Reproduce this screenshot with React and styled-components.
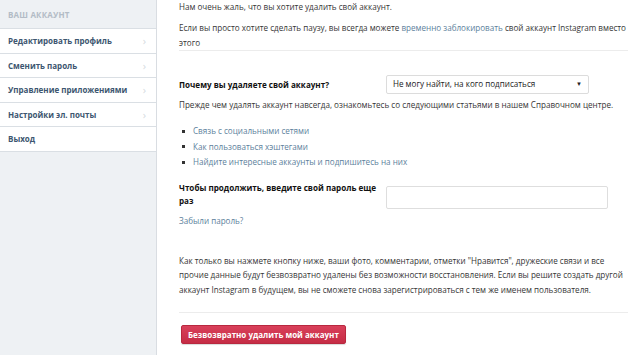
import React from 'react';
import styled, { createGlobalStyle } from 'styled-components';

const Global = createGlobalStyle`
  html, body { margin: 0; padding: 0; background: #fff; }
  body { font-family: "Open Sans", "Noto Sans", Arial, sans-serif; }
`;

const Page = styled.div`
  display: flex;
  width: 640px;
  height: 355px;
  overflow: hidden;
  background: #fff;
`;

const Sidebar = styled.aside`
  width: 156px;
  flex-shrink: 0;
  background: #eef1f4;
  border-right: 1px solid #d9dde2;
`;

const SideTitle = styled.div`
  height: 28px;
  padding-left: 8px;
  display: flex;
  align-items: center;
  font-size: 8px;
  font-weight: 700;
  color: #b3bcc6;
  letter-spacing: 0.2px;
`;

const Menu = styled.ul`
  list-style: none;
  margin: 0;
  padding: 0;
  border-top: 1px solid #dadfe4;
`;

const MenuItem = styled.li`
  height: 23.5px;
  display: flex;
  align-items: center;
  justify-content: space-between;
  padding: 0 10px 0 8px;
  background: #fff;
  border-bottom: 1px solid #dadfe4;
  font-size: 8px;
  font-weight: 700;
  color: #3d5670;
`;

const Chevron = styled.span`
  color: #d5dae0;
  font-size: 11px;
  font-weight: 400;
`;

const Main = styled.main`
  flex: 1;
  padding: 0 12px 0 22px;
  font-size: 8.1px;
  color: #363636;
  line-height: 14.5px;
`;

const P = styled.p`
  margin: ${p => p.$m || '0'};
`;

const Link = styled.a`
  color: #5d7f9c;
  text-decoration: none;
`;

const Divider = styled.hr`
  border: 0;
  border-top: 1px solid #ececec;
  margin: ${p => p.$m || '0'};
`;

const FormRow = styled.div`
  display: grid;
  grid-template-columns: 207px 1fr;
  align-items: ${p => p.$align || 'center'};
  margin: ${p => p.$m || '0'};
`;

const Label = styled.div`
  font-weight: 700;
  color: #111;
  line-height: 13px;
  padding-right: 8px;
`;

const Select = styled.div`
  width: 203px;
  height: 19px;
  box-sizing: border-box;
  border: 1px solid #dcdcdc;
  border-radius: 2px;
  display: flex;
  align-items: center;
  justify-content: space-between;
  padding: 0 6px 0 6px;
  color: #222;
`;

const Caret = styled.span`
  font-size: 6px;
  color: #222;
`;

const Input = styled.div`
  width: 222px;
  height: 23px;
  margin-top: 5.5px;
  box-sizing: border-box;
  border: 1px solid #dedede;
  border-radius: 2px;
`;

const Bullets = styled.ul`
  margin: ${p => p.$m || '0'};
  padding: 0 0 0 3px;
  list-style: none;
`;

const Bullet = styled.li`
  display: flex;
  align-items: center;
  height: 15.5px;
  &::before {
    content: '';
    width: 3px;
    height: 3px;
    background: #333;
    margin-right: 8px;
  }
`;

const DangerButton = styled.button`
  display: block;
  margin: 12px 0 0 2px;
  height: 19px;
  padding: 0 6px;
  border: 1px solid #b8283f;
  border-radius: 2px;
  background: linear-gradient(#d9405a, #c52c45);
  color: #fff;
  font-family: inherit;
  font-size: 8px;
  font-weight: 700;
  box-shadow: 0 1px 1px rgba(0,0,0,0.15);
`;

const sideItems = ['Редактировать профиль', 'Сменить пароль', 'Управление приложениями', 'Настройки эл. почты', 'Выход'];

export default function App() {
  return (
    <Page>
      <Global />
      <Sidebar>
        <SideTitle>ВАШ АККАУНТ</SideTitle>
        <Menu>
          {sideItems.map((t, i) => (
            <MenuItem key={t}>
              {t}
              {i < 4 && <Chevron>&#8250;</Chevron>}
            </MenuItem>
          ))}
        </Menu>
      </Sidebar>
      <Main>
        <P>Нам очень жаль, что вы хотите удалить свой аккаунт.</P>
        <P $m="6.5px 0 0">
          Если вы просто хотите сделать паузу, вы всегда можете <Link>временно заблокировать</Link> свой аккаунт Instagram вместо этого
        </P>
        <Divider />
        <FormRow $m="24px 0 0">
          <Label>Почему вы удаляете свой аккаунт?</Label>
          <Select>
            Не могу найти, на кого подписаться
            <Caret>▼</Caret>
          </Select>
        </FormRow>
        <P $m="4px 0 0">Прежде чем удалять аккаунт навсегда, ознакомьтесь со следующими статьями в нашем Справочном центре.</P>
        <Bullets $m="11px 0 0">
          <Bullet><Link>Связь с социальными сетями</Link></Bullet>
          <Bullet><Link>Как пользоваться хэштегами</Link></Bullet>
          <Bullet><Link>Найдите интересные аккаунты и подпишитесь на них</Link></Bullet>
        </Bullets>
        <FormRow $m="10.5px 0 0" $align="start">
          <Label>Чтобы продолжить, введите свой пароль еще раз</Label>
          <Input />
        </FormRow>
        <P $m="4.5px 0 0"><Link>Забыли пароль?</Link></P>
        <P $m="25.5px 0 0">
          Как только вы нажмете кнопку ниже, ваши фото, комментарии, отметки "Нравится", дружеские связи и все прочие данные будут безвозвратно удалены без возможности восстановления. Если вы решите создать другой аккаунт Instagram в будущем, вы не сможете снова зарегистрироваться с тем же именем пользователя.
        </P>
        <Divider $m="15px 0 0" />
        <DangerButton>Безвозвратно удалить мой аккаунт</DangerButton>
      </Main>
    </Page>
  );
}
